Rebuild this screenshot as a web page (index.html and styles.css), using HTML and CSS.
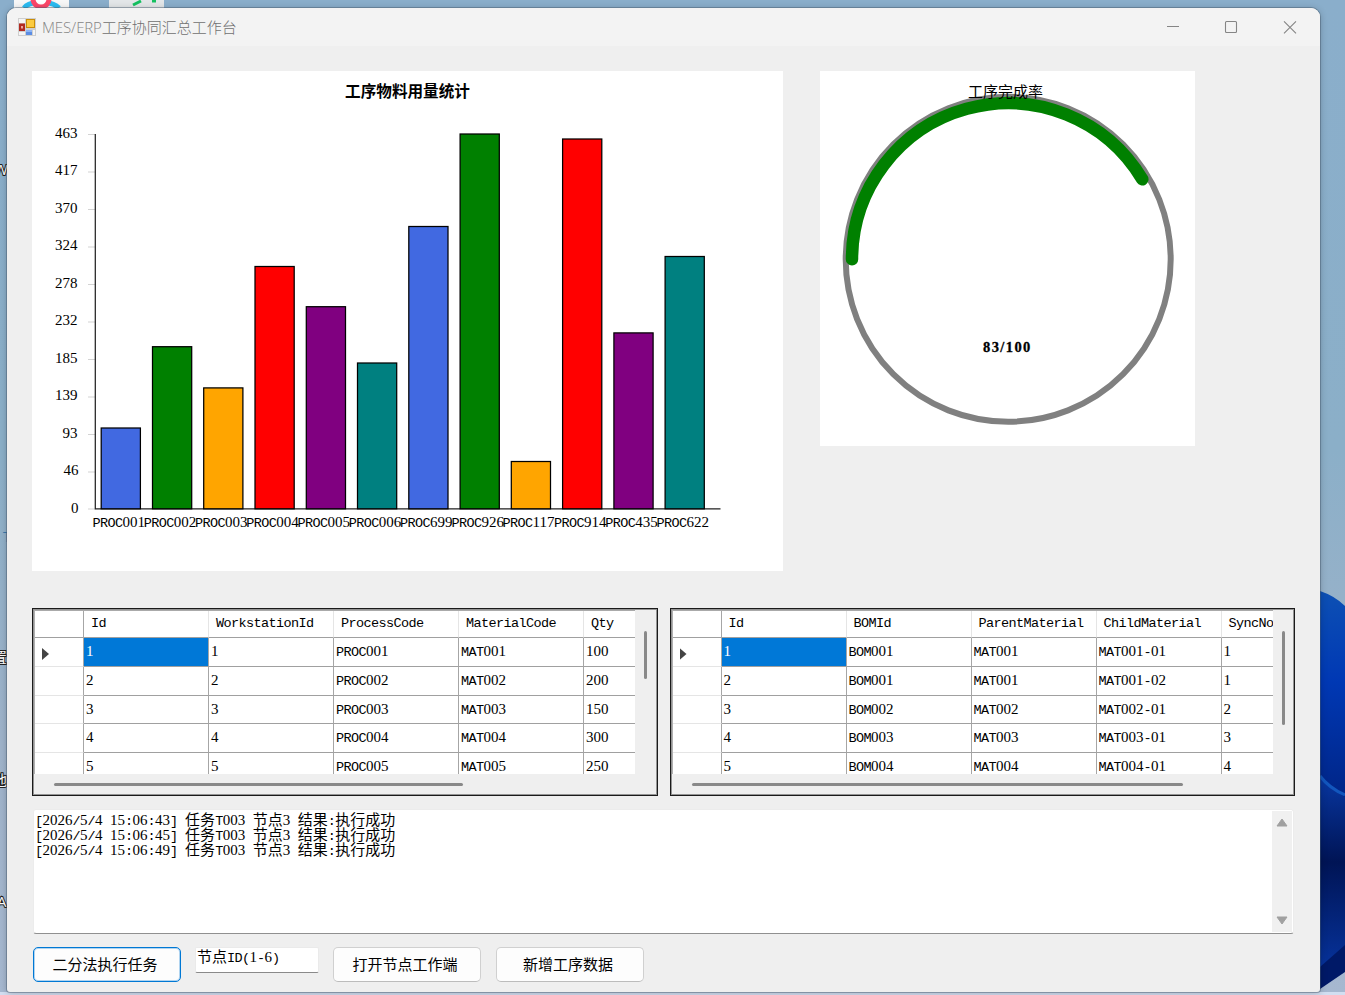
FILE: index.html
```html
<!DOCTYPE html>
<html lang="zh-CN">
<head>
<meta charset="utf-8">
<title>MES/ERP工序协同汇总工作台</title>
<link rel="stylesheet" href="styles.css">
</head>
<body>
<svg class="wallpaper" width="1345" height="995" viewBox="0 0 1345 995">
  <defs>
    <linearGradient id="petal" x1="0" y1="0" x2="0" y2="1"><stop offset="0" stop-color="#0d50b4"/><stop offset=".35" stop-color="#0038b4"/><stop offset="1" stop-color="#001c72"/></linearGradient>
    <linearGradient id="petal2" x1="0" y1="0" x2="0" y2="1"><stop offset="0" stop-color="#0836a0"/><stop offset=".4" stop-color="#001455"/><stop offset="1" stop-color="#0838a8"/></linearGradient>
  </defs>
  <rect x="14" y="-10" width="55" height="24" fill="#f7f7f7"/>
  <path d="M24 8Q28 3 36 3M46 3Q54 3 59 8" fill="none" stroke="#2bbcf2" stroke-width="5"/>
  <circle cx="41" cy="-1" r="8" fill="#fff" stroke="#fb4668" stroke-width="5"/>
  <rect x="109" y="-20" width="55" height="40" rx="12" fill="#e3e6e8"/>
  <path d="M133 5l8-4M152 1h4" stroke="#14c160" stroke-width="3" fill="none"/>
  <path d="M1320 591Q1335 596 1345 606V850H1320Z" fill="url(#petal)"/>
  <path d="M1320 778Q1329 789 1345 797V970L1320 988Z" fill="url(#petal2)"/>
  <path d="M1320 776Q1329 788 1345 795" fill="none" stroke="#1256bd" stroke-width="3"/>
  <path d="M1320 967L1345 945V972L1320 989Z" fill="#001967"/>
  <rect y="992" width="1345" height="3" fill="#d2def1"/>
  <g class="desk-label">
    <text x="-6" y="175">W</text><text x="3" y="542" class="blue">T</text><text x="-8" y="663">置</text><text x="-8" y="786">地</text><text x="-3" y="907">A</text>
  </g>
</svg>

<div class="window">
  <header class="titlebar">
    <svg class="app-icon" width="18" height="18" viewBox="0 0 18 18">
      <rect width="18" height="18" fill="#cfcfcf"/><path d="M1 1h6v4H1zM1 14h6v3H1zM15 12h2v5h-2z" fill="#f5f5f5"/>
      <rect x="1" y="5.500" width="6" height="7.500" fill="#b22a20"/><rect x="3" y="8" width="2" height="2.500" fill="#eba59b"/>
      <rect x="8" y="1" width="9" height="9" fill="#c98d08"/><rect x="9" y="2" width="7" height="7" fill="#fbcb40"/>
      <rect x="8" y="12" width="6" height="5" fill="#5b8de4"/><rect x="8" y="12" width="6" height="2" fill="#8db4f4"/>
    </svg>
    <span class="title"><span class="title-latin">MES/ERP</span>工序协同汇总工作台</span>
    <svg class="controls" width="132" height="14" viewBox="0 0 132 14" fill="none" stroke="#858585" stroke-width="1.1">
      <path d="M0 6.500h12"/><rect x="58.500" y="1.500" width="11" height="11" rx="1"/><path d="M117 1.300l12 12M129 1.300l-12 12"/>
    </svg>
  </header>

  <main class="client">
    <section class="charts">
      <svg class="panel" width="751" height="500" viewBox="32 71 751 500">
        <text class="chart-title" x="407.500" y="97" text-anchor="middle">工序物料用量统计</text>
        <path d="M88 134.500h8M88 172h8M88 209.500h8M88 247h8M88 284.500h8M88 322h8M88 359.500h8M88 397h8M88 434.500h8M88 472h8M88 509h8" stroke="#d3d3d3"/>
        <path d="M95.300 134V508.800H720.500" fill="none" stroke="#222" stroke-width="1.250"/>
        <g class="num" text-anchor="end">
          <text x="77.500" y="137.500">463</text><text x="77.500" y="175">417</text><text x="77.500" y="212.500">370</text><text x="77.500" y="250">324</text><text x="77.500" y="287.500">278</text><text x="77.500" y="325">232</text><text x="77.500" y="362.500">185</text><text x="77.500" y="400">139</text><text x="77.500" y="437.500">93</text><text x="78.500" y="475">46</text><text x="78.500" y="512.500">0</text>
        </g>
        <g stroke="#000" stroke-width="1.250">
          <rect x="101.200" y="428" width="39.200" height="80.800" fill="#4169e1"/>
          <rect x="152.500" y="346.700" width="39.200" height="162.100" fill="#008000"/>
          <rect x="203.700" y="387.900" width="39.200" height="120.900" fill="#ffa500"/>
          <rect x="255" y="266.500" width="39.200" height="242.300" fill="#f00"/>
          <rect x="306.300" y="306.700" width="39.200" height="202.100" fill="#800080"/>
          <rect x="357.500" y="363" width="39.200" height="145.800" fill="#008080"/>
          <rect x="408.800" y="226.500" width="39.200" height="282.300" fill="#4169e1"/>
          <rect x="460.100" y="134" width="39.200" height="374.800" fill="#008000"/>
          <rect x="511.300" y="461.500" width="39.200" height="47.300" fill="#ffa500"/>
          <rect x="562.600" y="139" width="39.200" height="369.800" fill="#f00"/>
          <rect x="613.900" y="332.900" width="39.200" height="175.900" fill="#800080"/>
          <rect x="665.100" y="256.500" width="39.200" height="252.300" fill="#008080"/>
        </g>
        <g class="num">
          <text x="92.500" y="527"><tspan class="m">PROC</tspan>001</text><text x="143.800" y="527"><tspan class="m">PROC</tspan>002</text><text x="195" y="527"><tspan class="m">PROC</tspan>003</text><text x="246.300" y="527"><tspan class="m">PROC</tspan>004</text><text x="297.600" y="527"><tspan class="m">PROC</tspan>005</text><text x="348.800" y="527"><tspan class="m">PROC</tspan>006</text><text x="400.100" y="527"><tspan class="m">PROC</tspan>699</text><text x="451.400" y="527"><tspan class="m">PROC</tspan>926</text><text x="502.600" y="527"><tspan class="m">PROC</tspan>117</text><text x="553.900" y="527"><tspan class="m">PROC</tspan>914</text><text x="605.200" y="527"><tspan class="m">PROC</tspan>435</text><text x="656.400" y="527"><tspan class="m">PROC</tspan>622</text>
        </g>
      </svg>
      <svg class="panel" width="375" height="375" viewBox="820 71 375 375">
        <circle cx="1008.200" cy="259.300" r="162.500" fill="none" stroke="#808080" stroke-width="6"/>
        <path d="M852 259.200A156.200 156.200 0 0 1 1142.300 179.300" fill="none" stroke="#008000" stroke-width="12.500" stroke-linecap="round"/>
        <text class="cjk" x="968" y="96.500">工序完成率</text>
        <text class="ratio" x="983" y="352">83/100</text>
      </svg>
    </section>

    <section class="grids">
      <div class="datagrid">
        <div class="view">
          <div class="row head"><span></span><span>Id</span><span>WorkstationId</span><span>ProcessCode</span><span>MaterialCode</span><span>Qty</span></div>
          <div class="row"><span><i class="cursor"></i></span><span class="selected">1</span><span>1</span><span><b>PROC</b>001</span><span><b>MAT</b>001</span><span>100</span></div>
          <div class="row"><span></span><span>2</span><span>2</span><span><b>PROC</b>002</span><span><b>MAT</b>002</span><span>200</span></div>
          <div class="row"><span></span><span>3</span><span>3</span><span><b>PROC</b>003</span><span><b>MAT</b>003</span><span>150</span></div>
          <div class="row"><span></span><span>4</span><span>4</span><span><b>PROC</b>004</span><span><b>MAT</b>004</span><span>300</span></div>
          <div class="row"><span></span><span>5</span><span>5</span><span><b>PROC</b>005</span><span><b>MAT</b>005</span><span>250</span></div>
        </div>
        <div class="vbar"><i class="vthumb"></i></div>
        <div class="hbar"><i class="hthumb"></i></div>
      </div>
      <div class="datagrid">
        <div class="view">
          <div class="row head"><span></span><span>Id</span><span>BOMId</span><span>ParentMaterial</span><span>ChildMaterial</span><span>SyncNo</span></div>
          <div class="row"><span><i class="cursor"></i></span><span class="selected">1</span><span><b>BOM</b>001</span><span><b>MAT</b>001</span><span><b>MAT</b>001<b>-</b>01</span><span>1</span></div>
          <div class="row"><span></span><span>2</span><span><b>BOM</b>001</span><span><b>MAT</b>001</span><span><b>MAT</b>001<b>-</b>02</span><span>1</span></div>
          <div class="row"><span></span><span>3</span><span><b>BOM</b>002</span><span><b>MAT</b>002</span><span><b>MAT</b>002<b>-</b>01</span><span>2</span></div>
          <div class="row"><span></span><span>4</span><span><b>BOM</b>003</span><span><b>MAT</b>003</span><span><b>MAT</b>003<b>-</b>01</span><span>3</span></div>
          <div class="row"><span></span><span>5</span><span><b>BOM</b>004</span><span><b>MAT</b>004</span><span><b>MAT</b>004<b>-</b>01</span><span>4</span></div>
        </div>
        <div class="vbar"><i class="vthumb tall"></i></div>
        <div class="hbar"><i class="hthumb wide"></i></div>
      </div>
    </section>

    <section class="log">
      <div class="lines">
        <p><b>[</b>2026<b>/</b>5<b>/</b>4<b> </b>15<b>:</b>06<b>:</b>43<b>] </b>任务<b>T</b>003<b> </b>节点3<b> </b>结果<b>:</b>执行成功</p>
        <p><b>[</b>2026<b>/</b>5<b>/</b>4<b> </b>15<b>:</b>06<b>:</b>45<b>] </b>任务<b>T</b>003<b> </b>节点3<b> </b>结果<b>:</b>执行成功</p>
        <p><b>[</b>2026<b>/</b>5<b>/</b>4<b> </b>15<b>:</b>06<b>:</b>49<b>] </b>任务<b>T</b>003<b> </b>节点3<b> </b>结果<b>:</b>执行成功</p>
      </div>
      <div class="log-scroll">
        <svg width="12" height="9" viewBox="0 0 12 9"><path d="M6 1L11 8H1Z" fill="#a0a0a0" stroke="#a0a0a0" stroke-linejoin="round"/></svg>
        <svg width="12" height="9" viewBox="0 0 12 9"><path d="M6 8L11 1H1Z" fill="#a0a0a0" stroke="#a0a0a0" stroke-linejoin="round"/></svg>
      </div>
    </section>

    <footer class="actions">
      <button class="btn focused">二分法执行任务</button>
      <div class="field">节点<b>ID(</b>1<b>-</b>6<b>)</b></div>
      <button class="btn">打开节点工作端</button>
      <button class="btn">新增工序数据</button>
    </footer>
  </main>
</div>
</body>
</html>
```
FILE: styles.css
```css
* { box-sizing: border-box; }

body {
  margin: 0;
  width: 1345px;
  height: 995px;
  overflow: hidden;
  position: relative;
  background: linear-gradient(180deg, #8aaecb 0%, #8bafc8 45%, #9fb3ca 75%, #a6b8d0 100%);
  font: 15px "Liberation Serif", "Noto Sans CJK SC", serif;
  color: #000;
}

.wallpaper { position: absolute; left: 0; top: 0; }
.desk-label { font: 15px "Open Sans", "Noto Sans CJK SC", sans-serif; fill: #fff; stroke: #222; stroke-width: 2px; paint-order: stroke; }
.desk-label .blue { fill: #3b78ab; stroke: none; }

.window {
  position: absolute;
  left: 7px;
  top: 8px;
  width: 1313px;
  height: 984px;
  background: #efefef;
  border-radius: 9px 9px 3px 3px;
  overflow: hidden;
  box-shadow: 0 0 0 1px rgba(70, 90, 110, .45), 0 1px 7px rgba(0, 0, 0, .25);
}

.titlebar {
  height: 38px;
  padding: 0 21px 0 11px;
  display: flex;
  align-items: center;
  background: #f3f3f3;
}
.title {
  margin-left: 6px;
  flex: 1;
  font: 300 15px/36px "Noto Sans CJK SC", sans-serif;
  color: #707070;
  white-space: nowrap;
}
.title-latin { font-family: "Open Sans", sans-serif; letter-spacing: -.1px; color: #858585; }

.client { padding: 25px 25px 0; }

.charts { display: flex; gap: 37px; align-items: flex-start; }
.panel { display: block; flex: none; background: #fff; }
.chart-title { font: bold 15.6px "Noto Sans CJK SC", sans-serif; }
.cjk { font: 15px "Noto Sans CJK SC", sans-serif; }
.num { font: 15px "Liberation Serif", serif; }
.ratio { font: bold 14.5px "Liberation Serif", serif; letter-spacing: 1.4px; stroke: #000; stroke-width: .3px; }
.m, b { font: 13.5px "Liberation Mono", monospace; letter-spacing: -.6px; }
b { line-height: inherit; white-space: pre; }

.grids { display: flex; gap: 12px; margin-top: 37px; }
.datagrid {
  width: 626px;
  height: 188px;
  border: 1px solid #1b1b1b;
  box-shadow: inset 0 0 0 1px rgba(0, 0, 0, .38);
  padding: 1px;
  display: grid;
  grid-template-columns: 601px 1fr;
  grid-template-rows: 164px 1fr;
}
.view { overflow: hidden; background: #fff; border-left: 1px solid #b0b0b0; border-top: 1px solid #aaa; }
.row {
  display: grid;
  grid-template-columns: 49px repeat(5, 125px);
  height: 28.75px;
  line-height: 27px;
}
.row > span {
  padding-left: 2px;
  border-right: 1px solid #a6a6a6;
  border-bottom: 1px solid #a0a0a0;
  overflow: hidden;
  white-space: nowrap;
}
.row > span:first-child { border-bottom-color: #e5e5e5; padding-left: 7px; }
.row.head { height: 27px; font: 13.5px/26px "Liberation Mono", monospace; letter-spacing: -.6px; }
.row.head > span { padding-left: 7px; border-right-color: #e5e5e5; border-bottom-color: #a0a0a0; }
.row.head > span:first-child { border-right-color: #a6a6a6; }
.row > .selected { background: #0078d7; color: #fff; }
.cursor { display: block; margin-top: 10px; width: 7px; height: 12px; background: #444; clip-path: polygon(0 0, 100% 50%, 0 100%); }
.vbar { padding: 21px 0 0 9px; }
.vthumb { display: block; width: 3px; height: 48px; border-radius: 2px; background: #898989; }
.vthumb.tall { height: 94px; }
.hbar { grid-column: 1 / 3; padding: 9px 0 0 20px; }
.hthumb { display: block; width: 409px; height: 3px; border-radius: 2px; background: #898989; }
.hthumb.wide { width: 491px; }

.log {
  display: flex;
  justify-content: space-between;
  margin: 13px 0 0 1px;
  width: 1261px;
  height: 125px;
  background: #fff;
  border: 1px solid #ececec;
  border-bottom: 1px solid #909090;
  border-radius: 3px;
}
.lines { padding: 3px 0 0 1px; }
.lines p { margin: 0; height: 15px; line-height: 15px; white-space: pre; }
.log-scroll {
  width: 20px;
  margin: 1px 1px 1px 0;
  background: #f0f0f0;
  display: flex;
  flex-direction: column;
  justify-content: space-between;
  align-items: center;
  padding: 7px 0;
}

.actions { display: flex; align-items: flex-start; margin: 13px 0 0 1px; }
.btn {
  width: 148px;
  height: 35px;
  margin: 0 15px 0 0;
  padding: 0 4px 1px 0;
  background: #fdfdfd;
  border: 1px solid #d0d0d0;
  border-bottom-color: #bcbcbc;
  border-radius: 5px;
  font: 15px/32px "Noto Sans CJK SC", sans-serif;
  color: #000;
}
.btn.focused { border: 1px solid #0078d4; box-shadow: inset 0 0 0 1px rgba(0, 120, 212, .3); margin-right: 14px; }
.field {
  width: 124px;
  height: 26px;
  margin-right: 14px;
  padding-left: 1px;
  background: #fff;
  border: 1px solid #eaeaea;
  border-bottom: 1px solid #8a8a8a;
  border-radius: 2px;
  line-height: 19px;
  white-space: nowrap;
}
```
